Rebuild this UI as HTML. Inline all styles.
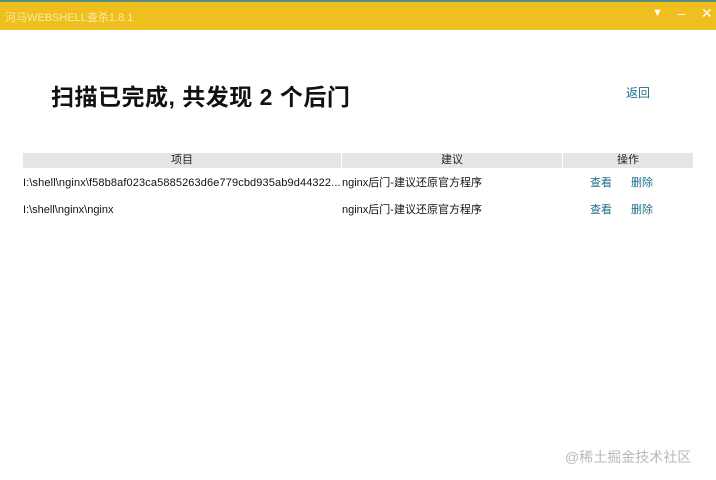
<!DOCTYPE html>
<html><head><meta charset="utf-8"><style>
body{margin:0;width:716px;height:480px;background:#fff;position:relative;overflow:hidden;font-family:"Liberation Sans","Noto Sans CJK SC",sans-serif;}
.t{position:absolute;white-space:nowrap;}
.bar{position:absolute;left:0;top:0;width:716px;height:30px;background:#efbf1f;border-top:2px solid #5a8f80;box-sizing:border-box;}
.hd{position:absolute;top:153px;height:15px;background:#e6e6e6;font-size:11px;line-height:15px;text-align:center;color:#222;}
.c{font-size:11px;color:#111;line-height:15px;}
.l{font-size:11px;color:#1d6e8a;line-height:15px;}
</style></head><body>
<div class="bar"></div>
<div class="t" style="left:5px;top:9px;font-size:11px;color:#fbeaa8;">河马WEBSHELL查杀1.8.1</div>
<div class="t" style="left:652px;top:7px;color:#fff;font-size:11px;">▼</div>
<div class="t" style="left:678px;top:6px;color:#fff;font-size:13px;">–</div>
<div class="t" style="left:701px;top:5px;color:#fff;font-size:14px;">✕</div>
<div class="t" style="left:51px;top:78px;font-size:23px;font-weight:bold;color:#111;letter-spacing:0.5px;">扫描已完成, 共发现 2 个后门</div>
<div class="t l" style="left:626px;top:86px;font-size:12px;">返回</div>
<div class="hd" style="left:23px;width:318px;">项目</div>
<div class="hd" style="left:342px;width:220px;">建议</div>
<div class="hd" style="left:563px;width:130px;">操作</div>
<div class="t c" style="left:23px;top:176px;letter-spacing:0.12px;">I:\shell\nginx\f58b8af023ca5885263d6e779cbd935ab9d44322...</div>
<div class="t c" style="left:342px;top:176px;">nginx后门-建议还原官方程序</div>
<div class="t l" style="left:590px;top:176px;">查看</div>
<div class="t l" style="left:631px;top:176px;">删除</div>
<div class="t c" style="left:23px;top:203px;">I:\shell\nginx\nginx</div>
<div class="t c" style="left:342px;top:203px;">nginx后门-建议还原官方程序</div>
<div class="t l" style="left:590px;top:203px;">查看</div>
<div class="t l" style="left:631px;top:203px;">删除</div>
<div class="t" style="left:565px;top:447px;font-size:14px;color:#b8b8b8;">@稀土掘金技术社区</div>
</body></html>
